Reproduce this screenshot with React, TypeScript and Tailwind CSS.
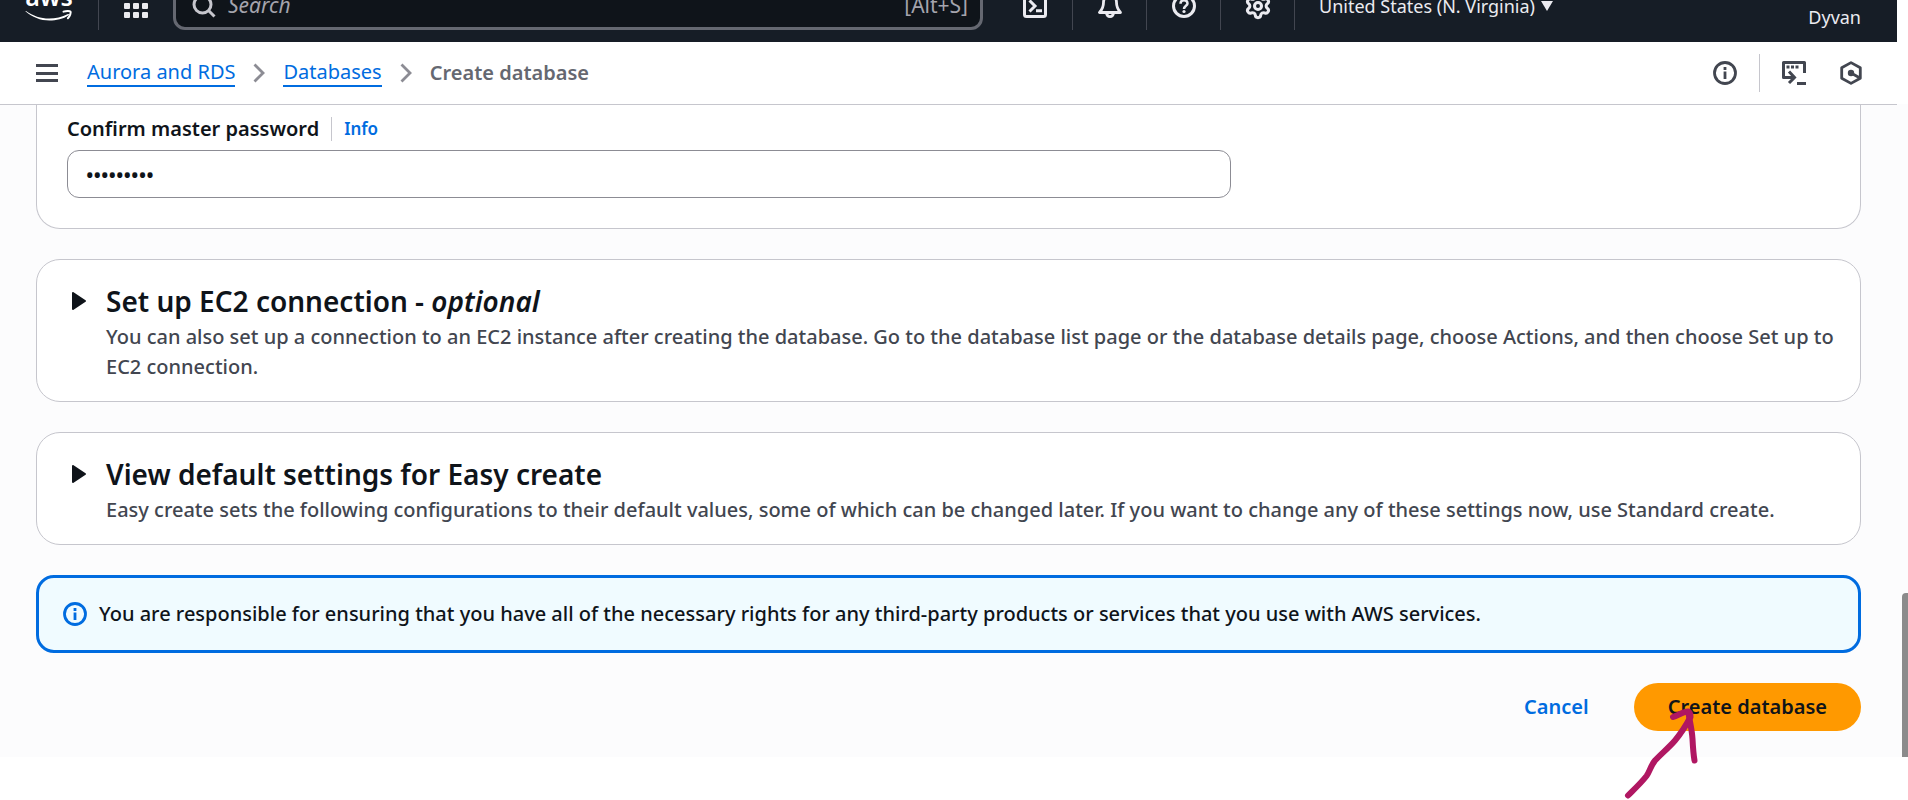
import React, { type ReactNode } from "react";
import { Settings } from "lucide-react";

function AwsLogo() {
  return (
    <svg width="48" height="46" viewBox="0 0 48 46" aria-hidden="true">
      <text x="24" y="23" textAnchor="middle" fill="#fff" fontFamily="Noto Sans, sans-serif" fontWeight="600" fontSize="25">
        aws
      </text>
      <path d="M1 28c7 5 15 7.600 23 7.600 6.500 0 13-1.700 19-4.600 1-.400 1.400.700.600 1.300C38.500 36 31 37.600 24.500 37.600 15.500 37.600 7 34.200.700 28.600c-.400-.400-.100-.900.300-.600z" fill="#fff" />
      <path d="M38.500 28.600c2.600-.900 6.300-1 7 0 .600 1.100-.500 4.600-2.600 6.600" fill="none" stroke="#fff" strokeWidth="2" strokeLinecap="round" />
    </svg>
  );
}

function AppsIcon() {
  const cells = [0, 9, 18];
  return (
    <svg width="24" height="24" viewBox="0 0 24 24" fill="#ebebf0" aria-hidden="true">
      {cells.map((y) => cells.map((x) => <rect key={`${x}-${y}`} x={x} y={y} width="6" height="6" rx="1" />))}
    </svg>
  );
}

function SearchIcon() {
  return (
    <svg width="24" height="24" viewBox="0 0 24 24" fill="none" stroke="#c6c6cd" strokeWidth="3" aria-hidden="true">
      <circle cx="10.500" cy="10.500" r="8.500" />
      <path d="m16.500 16.500 6 6" />
    </svg>
  );
}

function ShellIcon() {
  return (
    <svg width="24" height="24" viewBox="0 0 24 24" fill="none" stroke="#ebebf0" strokeWidth="3" aria-hidden="true">
      <rect x="1.500" y="1.500" width="21" height="21" rx="2" />
      <path d="m6.500 6.500 5.500 5.500-5.500 5.500M13 16.700h6" />
    </svg>
  );
}

function BellIcon() {
  return (
    <svg width="24" height="24" viewBox="0 0 24 24" fill="none" stroke="#ebebf0" strokeWidth="2.800" strokeLinejoin="round" aria-hidden="true">
      <path d="M12 1.500c-4 0-6.500 3-6.500 7 0 4.500-.800 6.500-4 10h21c-3.200-3.500-4-5.500-4-10 0-4-2.500-7-6.500-7z" />
      <path d="M8.500 19c.300 2.400 1.600 3.600 3.500 3.600s3.200-1.200 3.500-3.600" />
    </svg>
  );
}

function HelpIcon() {
  return (
    <svg width="24" height="24" viewBox="0 0 24 24" fill="none" stroke="#ebebf0" aria-hidden="true">
      <circle cx="12" cy="12" r="10.500" strokeWidth="3" />
      <path d="M8.500 9.800c0-2.100 1.500-3.500 3.500-3.500s3.500 1.300 3.500 3.100c0 2.300-3.500 2.600-3.500 5.600" strokeWidth="2.500" />
      <circle cx="12" cy="17.500" r="1.600" fill="#ebebf0" stroke="none" />
    </svg>
  );
}

function InfoIcon() {
  return (
    <svg className="shrink-0" width="24" height="24" viewBox="0 0 24 24" fill="none" stroke="currentColor" strokeWidth="2.800" aria-hidden="true">
      <circle cx="12" cy="12" r="10.500" />
      <path d="M12 10.500V18M12 6v3" />
    </svg>
  );
}

function ConsoleIcon() {
  return (
    <svg width="24" height="24" viewBox="0 0 24 24" fill="none" stroke="currentColor" strokeWidth="3" aria-hidden="true">
      <path d="M22.500 12V1.500h-21v15H12" strokeLinejoin="round" />
      <path d="m7 10.500 5.500 6L7 22" />
      <path d="M15 22.500h9" />
      <path d="M4.500 6h12.500" strokeDasharray="3 1.500" />
    </svg>
  );
}

function HexIcon() {
  return (
    <svg width="24" height="24" viewBox="0 0 24 24" fill="none" stroke="currentColor" strokeWidth="2.800" aria-hidden="true">
      <path d="M12 1.600 21.300 6.800v10.400L12 22.400 2.700 17.200V6.800z" strokeLinejoin="round" />
      <circle cx="12" cy="12" r="3.200" fill="currentColor" stroke="none" />
      <path d="m12 12 9 5" />
    </svg>
  );
}

function Chevron() {
  return (
    <svg width="12" height="20" viewBox="0 0 12 20" fill="none" stroke="#8c8c94" strokeWidth="2.800" aria-hidden="true">
      <path d="m1.500 1.500 8.500 8.500-8.500 8.500" />
    </svg>
  );
}

function HeaderCell({ label, children }: { label: string; children: ReactNode }) {
  return (
    <>
      <span className="h-12 w-px shrink-0 bg-[#424650]" />
      <button type="button" aria-label={label} className="flex w-[73px] shrink-0 justify-center">
        {children}
      </button>
    </>
  );
}

function TopBar() {
  return (
    <header className="mr-[11px] flex h-[42px] items-end overflow-hidden bg-[#161d26] text-[#ebebf0]">
      <div className="flex h-[72px] flex-1 shrink-0 items-center pr-9 pl-[25px]">
        <a href="#home" aria-label="AWS home" className="shrink-0">
          <AwsLogo />
        </a>
        <span className="ml-[25px] h-12 w-px shrink-0 bg-[#424650]" />
        <button type="button" aria-label="Services" className="mx-[25px] shrink-0">
          <AppsIcon />
        </button>
        <div className="flex h-12 max-w-[810px] flex-1 items-center gap-3 rounded-xl border-3 border-[#656871] bg-[#0f141a] pr-3 pl-4">
          <SearchIcon />
          <input
            type="search"
            aria-label="Search"
            placeholder="Search"
            className="min-w-0 flex-1 bg-transparent text-[21px] outline-none placeholder:text-[#a4a4ad] placeholder:italic"
          />
          <span className="text-[21px] text-[#a4a4ad]">[Alt+S]</span>
        </div>
        <button type="button" aria-label="CloudShell" className="mr-[25px] ml-10 shrink-0">
          <ShellIcon />
        </button>
        <HeaderCell label="Notifications">
          <BellIcon />
        </HeaderCell>
        <HeaderCell label="Help">
          <HelpIcon />
        </HeaderCell>
        <HeaderCell label="Settings">
          <Settings size={28} strokeWidth={2.6} />
        </HeaderCell>
        <span className="h-12 w-px shrink-0 bg-[#424650]" />
        <button type="button" className="ml-6 flex shrink-0 items-center gap-1.5 text-lg">
          United States (N. Virginia)
          <svg width="12" height="10" viewBox="0 0 12 10" fill="currentColor" aria-hidden="true">
            <path d="M0 0h12L6 10z" />
          </svg>
        </button>
        <button type="button" className="ml-auto pt-[22px] text-lg leading-6">
          Dyvan
        </button>
      </div>
    </header>
  );
}

function NavBar() {
  return (
    <div className="mr-[11px] flex h-[63px] items-center border-b border-[#c6c6cd] pr-[34px] pl-9 text-[#424650]">
      <button type="button" aria-label="Open navigation">
        <svg width="22" height="18" viewBox="0 0 22 18" fill="currentColor" aria-hidden="true">
          <path d="M0 0h22v3H0zM0 8h22v3H0zM0 15h22v3H0z" />
        </svg>
      </button>
      <nav aria-label="Breadcrumbs" className="ml-[29px] flex items-center gap-[18px] text-xl leading-[26px]">
        <a href="#rds" className="border-b-2 border-[#006ce0] text-[#006ce0]">
          Aurora and RDS
        </a>
        <Chevron />
        <a href="#databases" className="border-b-2 border-[#006ce0] text-[#006ce0]">
          Databases
        </a>
        <Chevron />
        <span className="font-semibold text-[#656871]">Create database</span>
      </nav>
      <div className="ml-auto flex items-center">
        <button type="button" aria-label="Info panel">
          <InfoIcon />
        </button>
        <span className="mx-[22px] h-[38px] w-px bg-[#c6c6cd]" />
        <button type="button" aria-label="Console panel" className="mr-[33px]">
          <ConsoleIcon />
        </button>
        <button type="button" aria-label="Tools">
          <HexIcon />
        </button>
      </div>
    </div>
  );
}

function ExpandableCard({ title, children }: { title: ReactNode; children: ReactNode }) {
  return (
    <section className="flex gap-[15px] rounded-3xl border border-[#c6c6cd] bg-white pt-[23px] pr-6 pb-[19px] pl-[30px]">
      <button type="button" aria-label="Expand section" className="flex h-9 w-6 shrink-0 items-center justify-center">
        <svg width="14" height="18" viewBox="0 0 14 18" fill="#0f141a" stroke="#0f141a" strokeWidth="2" strokeLinejoin="round" aria-hidden="true">
          <path d="M1 1v16l12-8z" />
        </svg>
      </button>
      <div>
        <h2 className="text-[28px] leading-9 font-semibold">{title}</h2>
        <p className="mt-[3px] text-xl leading-[30px] font-medium text-[#424650]">{children}</p>
      </div>
    </section>
  );
}

function PointerArrow() {
  return (
    <svg
      className="pointer-events-none absolute -top-[13px] -left-4"
      width="90"
      height="130"
      viewBox="0 0 90 130"
      fill="none"
      stroke="#b01762"
      strokeWidth="6"
      strokeLinecap="round"
      strokeLinejoin="round"
      aria-hidden="true"
    >
      <path d="M10 125.500c7-7 13-12.500 18.500-19.500 3-4 4-10 8.500-15.500C43 84 51 77.500 57 70.500c5-6 11-15 15.500-23.500 0-3-.500-5-2.500-5.500-5 .500-9.500 3.500-15 5.500" />
      <path d="M70.500 43c1.500 10 3.500 17 4 26 .400 8 .700 14 2 21.500" />
    </svg>
  );
}

export default function App() {
  return (
    <div className="min-h-screen bg-white font-['Noto_Sans',sans-serif] text-[#0f141a]">
      <TopBar />
      <div className="bg-[linear-gradient(#fff_62px,#fcfcfd_62px)]">
        <div className="relative">
          <NavBar />
          <main className="mr-[11px] flex flex-col gap-[30px] px-9 pb-[26px]">
            <section className="rounded-b-3xl border border-t-0 border-[#c6c6cd] bg-white px-[30px] pt-[9px] pb-[30px]">
              <div className="flex items-center">
                <label htmlFor="confirm-password" className="text-xl leading-[30px] font-semibold">
                  Confirm master password
                </label>
                <span className="mx-3 h-6 w-px bg-[#c6c6cd]" />
                <a href="#info" className="text-[17px] leading-[30px] font-semibold text-[#006ce0]">
                  Info
                </a>
              </div>
              <input
                id="confirm-password"
                type="password"
                defaultValue="password1"
                className="mt-1.5 block h-12 w-[66%] rounded-xl border border-[#8c8c94] px-[18px] text-xl font-semibold outline-none"
              />
            </section>

            <ExpandableCard
              title={
                <>
                  Set up EC2 connection - <em>optional</em>
                </>
              }
            >
              You can also set up a connection to an EC2 instance after creating the database. Go to the database list page or the database details page, choose Actions, and then choose Set up to EC2 connection.
            </ExpandableCard>

            <ExpandableCard title="View default settings for Easy create">
              Easy create sets the following configurations to their default values, some of which can be changed later. If you want to change any of these settings now, use Standard create.
            </ExpandableCard>

            <div role="note" className="flex items-center gap-3 rounded-[18px] border-3 border-[#006ce0] bg-[#f0fbff] px-6 py-[21px]">
              <span className="text-[#006ce0]">
                <InfoIcon />
              </span>
              <p className="text-xl leading-[30px] font-medium">
                You are responsible for ensuring that you have all of the necessary rights for any third-party products or services that you use with AWS services.
              </p>
            </div>

            <div className="flex items-center justify-end gap-[15px]">
              <button type="button" className="h-12 px-[30px] text-xl font-semibold text-[#006ce0]">
                Cancel
              </button>
              <div className="relative">
                <button type="button" className="h-12 rounded-full bg-[#ff9900] px-[34px] text-xl font-semibold">
                  Create database
                </button>
                <PointerArrow />
              </div>
            </div>
          </main>
          <div className="absolute right-0 bottom-0 h-[164px] w-[6px] rounded-tl-sm bg-[#8b8b8b]" />
        </div>
      </div>
    </div>
  );
}
